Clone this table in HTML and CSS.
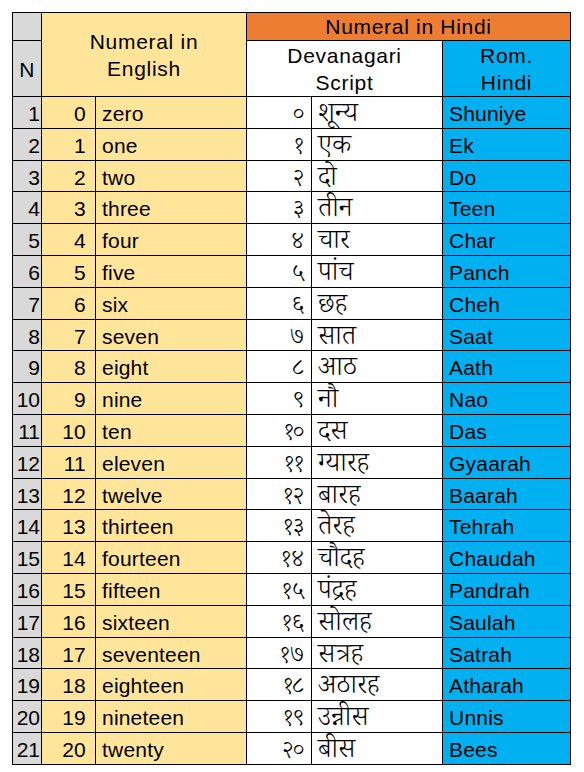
FILE: index.html
```html
<!DOCTYPE html>
<html lang="en">
<head>
<meta charset="utf-8">
<title>Numerals</title>
<link rel="stylesheet" href="styles.css">
</head>
<body>
<table class="nums">
  <colgroup>
    <col class="c-n"><col class="c-num"><col class="c-en"><col class="c-dd"><col class="c-dw"><col class="c-rom">
  </colgroup>
  <thead>
    <tr class="h1">
      <th class="grey"></th>
      <th class="yellow hd" colspan="2" rowspan="2">Numeral in<br>English</th>
      <th class="orange hd" colspan="3">Numeral in Hindi</th>
    </tr>
    <tr class="h2">
      <th class="grey hn">N</th>
      <th class="white hd" colspan="2">Devanagari<br>Script</th>
      <th class="blue hd">Rom.<br>Hindi</th>
    </tr>
  </thead>
  <tbody>
    <tr><td class="grey n">1</td><td class="yellow num">0</td><td class="yellow en">zero</td><td class="dd">०</td><td class="dw">शून्य</td><td class="blue rom">Shuniye</td></tr>
    <tr><td class="grey n">2</td><td class="yellow num">1</td><td class="yellow en">one</td><td class="dd">१</td><td class="dw">एक</td><td class="blue rom">Ek</td></tr>
    <tr><td class="grey n">3</td><td class="yellow num">2</td><td class="yellow en">two</td><td class="dd">२</td><td class="dw">दो</td><td class="blue rom">Do</td></tr>
    <tr><td class="grey n">4</td><td class="yellow num">3</td><td class="yellow en">three</td><td class="dd">३</td><td class="dw">तीन</td><td class="blue rom">Teen</td></tr>
    <tr><td class="grey n">5</td><td class="yellow num">4</td><td class="yellow en">four</td><td class="dd">४</td><td class="dw">चार</td><td class="blue rom">Char</td></tr>
    <tr><td class="grey n">6</td><td class="yellow num">5</td><td class="yellow en">five</td><td class="dd">५</td><td class="dw">पांच</td><td class="blue rom">Panch</td></tr>
    <tr><td class="grey n">7</td><td class="yellow num">6</td><td class="yellow en">six</td><td class="dd">६</td><td class="dw">छह</td><td class="blue rom">Cheh</td></tr>
    <tr><td class="grey n">8</td><td class="yellow num">7</td><td class="yellow en">seven</td><td class="dd">७</td><td class="dw">सात</td><td class="blue rom">Saat</td></tr>
    <tr><td class="grey n">9</td><td class="yellow num">8</td><td class="yellow en">eight</td><td class="dd">८</td><td class="dw">आठ</td><td class="blue rom">Aath</td></tr>
    <tr><td class="grey n">10</td><td class="yellow num">9</td><td class="yellow en">nine</td><td class="dd">९</td><td class="dw">नौ</td><td class="blue rom">Nao</td></tr>
    <tr><td class="grey n">11</td><td class="yellow num">10</td><td class="yellow en">ten</td><td class="dd">१०</td><td class="dw">दस</td><td class="blue rom">Das</td></tr>
    <tr><td class="grey n">12</td><td class="yellow num">11</td><td class="yellow en">eleven</td><td class="dd">११</td><td class="dw">ग्यारह</td><td class="blue rom">Gyaarah</td></tr>
    <tr><td class="grey n">13</td><td class="yellow num">12</td><td class="yellow en">twelve</td><td class="dd">१२</td><td class="dw">बारह</td><td class="blue rom">Baarah</td></tr>
    <tr><td class="grey n">14</td><td class="yellow num">13</td><td class="yellow en">thirteen</td><td class="dd">१३</td><td class="dw">तेरह</td><td class="blue rom">Tehrah</td></tr>
    <tr><td class="grey n">15</td><td class="yellow num">14</td><td class="yellow en">fourteen</td><td class="dd">१४</td><td class="dw">चौदह</td><td class="blue rom">Chaudah</td></tr>
    <tr><td class="grey n">16</td><td class="yellow num">15</td><td class="yellow en">fifteen</td><td class="dd">१५</td><td class="dw">पंद्रह</td><td class="blue rom">Pandrah</td></tr>
    <tr><td class="grey n">17</td><td class="yellow num">16</td><td class="yellow en">sixteen</td><td class="dd">१६</td><td class="dw">सोलह</td><td class="blue rom">Saulah</td></tr>
    <tr><td class="grey n">18</td><td class="yellow num">17</td><td class="yellow en">seventeen</td><td class="dd">१७</td><td class="dw">सत्रह</td><td class="blue rom">Satrah</td></tr>
    <tr><td class="grey n">19</td><td class="yellow num">18</td><td class="yellow en">eighteen</td><td class="dd">१८</td><td class="dw">अठारह</td><td class="blue rom">Atharah</td></tr>
    <tr><td class="grey n">20</td><td class="yellow num">19</td><td class="yellow en">nineteen</td><td class="dd">१९</td><td class="dw">उन्नीस</td><td class="blue rom">Unnis</td></tr>
    <tr><td class="grey n">21</td><td class="yellow num">20</td><td class="yellow en">twenty</td><td class="dd">२०</td><td class="dw">बीस</td><td class="blue rom">Bees</td></tr>
  </tbody>
</table>
</body>
</html>
```
FILE: styles.css
```css
html, body {
  margin: 0;
  padding: 0;
  background: #ffffff;
}
body {
  padding: 12px 0 0 12px;
  font-family: "Liberation Sans", Arial, sans-serif;
  color: #000;
}
.nums {
  border-collapse: collapse;
  table-layout: fixed;
  width: 558px;
  font-size: 21px;
  letter-spacing: 0.2px;
}
.c-n { width: 29px; }
.c-num { width: 54px; }
.c-en { width: 151px; }
.c-dd { width: 65px; }
.c-dw { width: 131px; }
.c-rom { width: 128px; }

.nums th, .nums td {
  border: 1px solid #000;
  padding: 0;
  white-space: nowrap;
}
.nums th {
  font-weight: normal;
  text-align: center;
  vertical-align: middle;
  line-height: 27px;
}
.nums th.hd { letter-spacing: 0.7px; }
.nums th.hn { padding-top: 2px; }
.h1 { height: 28px; }
.h2 { height: 56px; }
.nums tbody tr { height: 31.8px; }
.nums td {
  line-height: 26px;
  vertical-align: baseline;
  padding-top: 4px;
}

.grey { background: #d9d9d9; }
.yellow { background: #ffe599; }
.orange { background: #ed7d31; }
.blue { background: #00b0f0; }
.white { background: #ffffff; }

.nums td.n { text-align: right; padding-right: 1px; letter-spacing: 0; }
.nums td.num { text-align: right; padding-right: 9px; }
.nums td.en { text-align: left; padding-left: 6px; }
.nums td.dd {
  text-align: right;
  padding-right: 7px;
  font-family: "Noto Serif Devanagari", "Noto Sans Devanagari", "Lohit Devanagari", FreeSerif, serif;
  font-size: 24px;
  font-weight: 300;
  line-height: 14px;
  letter-spacing: 0;
}
.nums td.dw {
  text-align: left;
  padding-left: 6px;
  font-family: "Noto Serif Devanagari", "Noto Sans Devanagari", "Lohit Devanagari", FreeSerif, serif;
  font-size: 27px;
  font-weight: 300;
  line-height: 14px;
  letter-spacing: 0;
}
.nums td.rom { text-align: left; padding-left: 6px; }
```
